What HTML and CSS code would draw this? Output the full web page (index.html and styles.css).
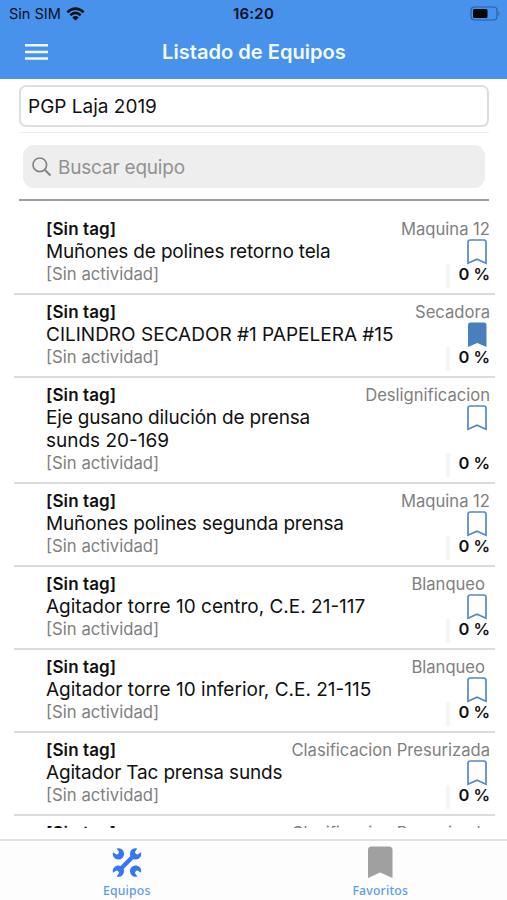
FILE: index.html
```html
<!DOCTYPE html>
<html lang="es">
<head>
<meta charset="utf-8">
<title>Listado de Equipos</title>
<link rel="stylesheet" href="styles.css">
</head>
<body>
<svg width="0" height="0" class="defs" aria-hidden="true">
  <symbol id="outline" viewBox="0 0 22 26"><path d="M2 24.2V3.2Q2 1 4.2 1H17.8Q20 1 20 3.2V24.2L11 20.2Z" fill="none" stroke="#5389c7" stroke-width="1.7"/></symbol>
  <symbol id="filled" viewBox="0 0 22 26"><path d="M2 25V3Q2 .5 4.5 .5H18Q20.500 .5 20.500 3V25L11.200 21Z" fill="#4a7fbd"/></symbol>
  <symbol id="jaw" viewBox="0 0 12 12"><path d="M7.800 .4A5.700 5.700 0 1 0 11.600 4.200L9.200 5.700A2 2 0 0 1 6.300 2.800Z" fill="#3478f0"/></symbol>
</svg>
<header>
  <div class="status">
    <div class="carrier"><span>Sin SIM</span>
      <svg width="19" height="14" viewBox="0 0 19 14"><path d="M1.300 5.200Q9.500 -2 17.700 5.200M4.300 8.200Q9.500 3.600 14.700 8.200" fill="none" stroke="#06101c" stroke-width="2.500"/><path d="M6.300 10.400Q9.500 7.800 12.700 10.400L9.500 13.600Z" fill="#06101c"/></svg>
    </div>
    <b class="clock">16:20</b>
    <svg class="battery" width="31" height="15" viewBox="0 0 31 15"><rect x="1" y="1" width="26" height="13" rx="3.500" fill="none" stroke="#2c5f9f" stroke-width="1.200"/><rect x="3" y="3" width="14.500" height="9" rx="1.500" fill="#050709"/><path d="M28.500 5.200Q30.500 7.500 28.500 9.800Z" fill="#2c5f9f"/></svg>
  </div>
  <div class="bar">
    <svg width="23" height="16" viewBox="0 0 23 16"><path d="M0 1.300H23M0 8H23M0 14.500H23" stroke="#f2faff" stroke-width="2.400"/></svg>
    <h1>Listado de Equipos</h1>
  </div>
</header>
<main>
  <div class="project">PGP Laja 2019</div>
  <div class="searchwrap"><div class="search">
    <svg width="20" height="20" viewBox="0 0 20 20"><circle cx="7.800" cy="7.800" r="6.800" fill="none" stroke="#858585" stroke-width="1.700"/><path d="M12.700 12.700L18.500 18.500" stroke="#858585" stroke-width="2.200"/></svg>
    <span>Buscar equipo</span>
  </div></div>
  <div class="list">
    <article><div class="info"><b>[Sin tag]</b><h2 class="tight">Muñones de polines retorno tela</h2><p>[Sin actividad]</p></div><div class="side"><span class="area">Maquina 12</span><svg><use href="#outline"/></svg><b class="pct">0 %</b></div></article>
    <article><div class="info"><b>[Sin tag]</b><h2>CILINDRO SECADOR #1 PAPELERA #15</h2><p>[Sin actividad]</p></div><div class="side"><span class="area">Secadora</span><svg><use href="#filled"/></svg><b class="pct">0 %</b></div></article>
    <article><div class="info"><b>[Sin tag]</b><h2><span class="tight">Eje gusano dilución de prensa</span><br>sunds 20-169</h2><p>[Sin actividad]</p></div><div class="side"><span class="area">Deslignificacion</span><svg><use href="#outline"/></svg><b class="pct">0 %</b></div></article>
    <article><div class="info"><b>[Sin tag]</b><h2 class="tight">Muñones polines segunda prensa</h2><p>[Sin actividad]</p></div><div class="side"><span class="area">Maquina 12</span><svg><use href="#outline"/></svg><b class="pct">0 %</b></div></article>
    <article><div class="info"><b>[Sin tag]</b><h2>Agitador torre 10 centro, C.E. 21-117</h2><p>[Sin actividad]</p></div><div class="side"><span class="area spaced">Blanqueo</span><svg><use href="#outline"/></svg><b class="pct">0 %</b></div></article>
    <article><div class="info"><b>[Sin tag]</b><h2>Agitador torre 10 inferior, C.E. 21-115</h2><p>[Sin actividad]</p></div><div class="side"><span class="area spaced">Blanqueo</span><svg><use href="#outline"/></svg><b class="pct">0 %</b></div></article>
    <article><div class="info"><b>[Sin tag]</b><h2 class="tight">Agitador Tac prensa sunds</h2><p>[Sin actividad]</p></div><div class="side"><span class="area">Clasificacion Presurizada</span><svg><use href="#outline"/></svg><b class="pct">0 %</b></div></article>
    <article><div class="info"><b>[Sin tag]</b></div><div class="side"><span class="area">Clasificacion Presurizada</span></div></article>
  </div>
</main>
<nav>
  <a><svg width="32" height="34" viewBox="0 0 32 34"><path d="M9 24.500L23 10.500" stroke="#3478f0" stroke-width="4.200"/><use href="#jaw" x="18.500" y="3" width="12" height="12"/><use href="#jaw" width="12" height="12" transform="translate(13.500 32) rotate(180)"/><use href="#jaw" width="12" height="12" transform="translate(1.500 15) rotate(-90)"/><use href="#jaw" width="12" height="12" transform="translate(30.500 20) rotate(90)"/></svg><span>Equipos</span></a>
  <a><svg width="32" height="34" viewBox="0 0 32 34"><path d="M4 33V5Q4 1.500 7.500 1.500H25Q28.500 1.500 28.500 5V33L16.200 27.500Z" fill="#a0a0a0"/></svg><span>Favoritos</span></a>
</nav>
</body>
</html>
```

FILE: styles.css
```css
* { box-sizing: border-box; }
body {
  margin: 0;
  height: 900px;
  display: flex;
  flex-direction: column;
  overflow: hidden;
  background: #fff;
  font-family: Inter, "Liberation Sans", sans-serif;
  color: #111;
}
.defs { position: absolute; }
h1, h2, p { margin: 0; }
header { height: 79px; background: #4992eb; flex: none; }
.status {
  height: 27px;
  display: grid;
  grid-template-columns: 1fr auto 1fr;
  align-items: center;
  padding: 0 9px 0 9px;
  color: #06101c;
}
.carrier { display: flex; align-items: center; gap: 5px; font-size: 14.5px; }
.clock { font-size: 15px; font-weight: 600; letter-spacing: .2px; }
.battery { justify-self: end; margin-right: -3px; }
.bar {
  height: 50px;
  display: grid;
  grid-template-columns: 60px 1fr 60px;
  align-items: center;
  color: #f2faff;
}
.bar svg { margin-left: 25px; }
h1 { font-size: 20.1px; font-weight: 600; text-align: center; white-space: nowrap; padding-left: 1px; }
main { height: 749px; flex: none; display: flex; flex-direction: column; overflow: hidden; }
.project {
  flex: none;
  height: 42px;
  margin: 6px 18px 0 19px;
  padding-left: 7px;
  border: 2px solid #dedede;
  border-radius: 7px;
  font-size: 19px;
  line-height: 39px;
}
.searchwrap {
  flex: none;
  height: 68px;
  margin: 6px 18px 0 19px;
  padding: 12px 4px 0;
  border-bottom: 2px solid #a0a0a0;
  box-shadow: 0 -1px #ececec;
}
.search {
  height: 43px;
  border-radius: 11px;
  background: #eee;
  color: #929292;
  display: flex;
  align-items: center;
  gap: 6px;
  padding: 1px 0 0 9px;
  font-size: 19px;
  letter-spacing: -.2px;
}
.list { flex: none; padding: 11px 12px 0 14px; }
article {
  display: flex;
  justify-content: space-between;
  min-height: 83px;
  padding: 5px 5px 7px 32px;
  border-bottom: 2px solid #dbdbdb;
}
.info { line-height: 23px; white-space: nowrap; font-size: 17px; }
.info b { display: block; font-weight: 600; height: 23px; line-height: 25px; letter-spacing: .1px; }
h2 { font-size: 19px; font-weight: 400; line-height: 23px; }
.tight { letter-spacing: -.17px; }
p { font-size: 16.7px; line-height: 23px; color: #808080; }
.side {
  display: flex;
  flex-direction: column;
  align-items: flex-end;
  font-size: 16.6px;
  white-space: nowrap;
}
.area { height: 23px; line-height: 25px; color: #808080; }
.spaced { padding-right: 5px; }
.side svg { width: 22px; height: 26px; margin: -1px 2px -1px 0; flex: none; }
.pct {
  margin-top: auto;
  height: 24px;
  line-height: 20px;
  padding-left: 8px;
  margin-bottom: -2px;
  border-left: 4px solid #f5f5f5;
  font-weight: 600;
  font-size: 16.5px;
  flex: none;
}
nav {
  margin-top: 11px;
  height: 61px;
  flex: none;
  display: grid;
  grid-template-columns: 1fr 1fr;
  border-top: 2px solid #e2e2e2;
  background: #fdfdfd;
}
nav a { display: flex; flex-direction: column; align-items: center; padding-top: 4px; }
nav span {
  font: 500 12.2px/16px "Noto Sans", sans-serif;
  letter-spacing: .2px;
  color: #5b9bee;
  margin-top: 4px;
}
```
